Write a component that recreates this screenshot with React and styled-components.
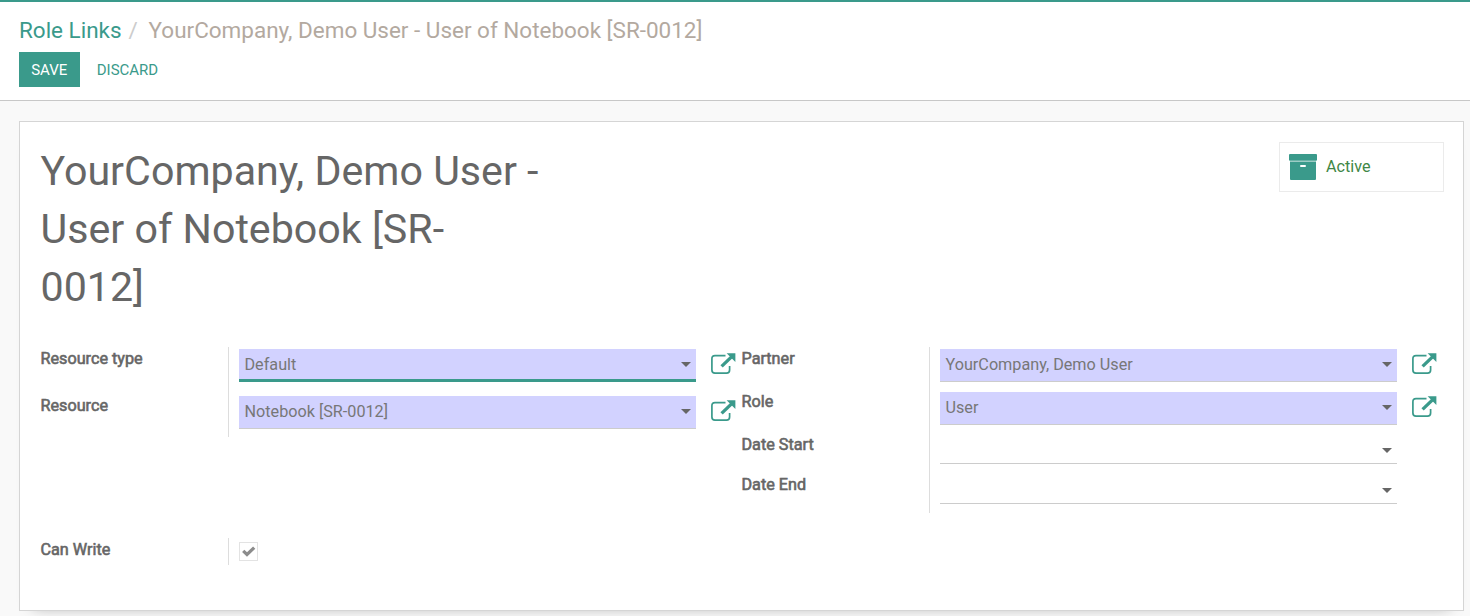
import React from "react";
import styled, { createGlobalStyle } from "styled-components";

const teal = "#3a9a8b";

const GlobalStyle = createGlobalStyle`
  *, *::before, *::after { box-sizing: border-box; }
  html { height: 100%; overflow: hidden; }
  body {
    margin: 0;
    height: 100%;
    overflow: hidden;
    background: #f9f9f9;
    color: #666;
    font: 16.2px/18px Roboto, "Liberation Sans", sans-serif;
  }
`;

const ControlPanel = styled.header`
  height: 101px;
  padding: 13px 19px 0;
  background: #fff;
  border-top: 2px solid ${teal};
  border-bottom: 1px solid #c8c8c8;
`;

const Breadcrumb = styled.nav`
  display: flex;
  height: 30px;
  font-size: 22.48px;
  line-height: 30px;
  white-space: pre;
  color: #b3a9a0;
`;

const Crumb = styled.a`
  color: ${teal};
`;

const Separator = styled.span`
  width: 27px;
  padding-left: 7px;
  color: #ccc;
`;

const Actions = styled.div`
  display: flex;
  gap: 5px;
  margin-top: 7px;
`;

const Button = styled.button`
  height: 35px;
  padding: 2px 12.2px 0;
  border: 0;
  background: ${(p) => (p.$primary ? teal : "transparent")};
  color: ${(p) => (p.$primary ? "#fff" : teal)};
  font: 15px/33px Roboto, sans-serif;
  text-transform: uppercase;
`;

const Sheet = styled.main`
  height: 490px;
  margin: 20px 6px 0 19px;
  padding: 20px 19px 0 20px;
  background: #fff;
  border: 1px solid #d5d5d5;
  box-shadow: 0 10px 14px -14px rgba(0, 0, 0, 0.35);
`;

const SheetTop = styled.div`
  display: flex;
  justify-content: space-between;
  align-items: flex-start;
  height: 205px;
`;

const Title = styled.h1`
  width: 503px;
  margin: 0;
  padding-left: 0.5px;
  font-size: 41.2px;
  font-weight: 400;
  line-height: 58px;
`;

const StatButton = styled.div`
  display: flex;
  align-items: center;
  width: 165px;
  height: 50px;
  padding-left: 9px;
  border: 1px solid #ebebeb;
  color: #3f8746;
`;

const StatLabel = styled.span`
  margin-left: 9px;
`;

const Columns = styled.div`
  display: flex;
  align-items: flex-start;
  height: 191px;
`;

const Group = styled.section`
  display: flex;
  flex-direction: column;
  width: 701px;
  flex: none;
`;

const Row = styled.div`
  display: flex;
  height: ${(p) => p.$height}px;
`;

const Label = styled.label`
  width: 189px;
  flex: none;
  padding: 3px 0 0 0.5px;
  border-right: 1px solid #ddd;
  -webkit-text-stroke: 0.6px #666;
`;

const Field = styled.div`
  display: flex;
  align-items: center;
  justify-content: space-between;
  width: 457px;
  height: ${(p) => (p.$empty ? 29 : 33)}px;
  margin: 2px 15px 0 10px;
  padding: 0 5px 0 5.5px;
  background: ${(p) => (p.$empty ? "transparent" : "#d2d2ff")};
  border-bottom: 1px solid #ccc;
  color: #777;
  ${(p) => p.$focused && `box-shadow: inset 0 -2px ${teal}; border-color: ${teal};`}
`;

const Caret = styled.span`
  border: 5px solid transparent;
  border-top-color: #666;
  border-bottom: 0;
  margin: ${(p) => (p.$empty ? "3px 0 0" : "0 0 2px")};
`;

const LinkIcon = styled.svg`
  width: 26px;
  height: 22px;
  margin-top: 6px;
  flex: none;
`;

const Checkbox = styled.span`
  display: flex;
  align-items: center;
  justify-content: center;
  width: 19px;
  height: 19px;
  margin: 4px 0 0 10px;
  border: 1px solid #e3e3e3;
`;

const ExternalLink = () => (
  <LinkIcon viewBox="0 0 26 22" fill="none" stroke={teal}>
    <path d="M14.5 2.6H4Q.9 2.6.9 5.7V17.1Q.9 20.2 4 20.2H15.5Q18.6 20.2 18.6 17.1V13" strokeWidth="1.7" />
    <path d="M10.6 13.4 20.5 3.9" strokeWidth="3.3" />
    <path d="M15.6 .3H24.4V9.1Z" fill={teal} stroke="none" />
  </LinkIcon>
);

const rowHeight = (field) => {
  if (!field.value) return 40;
  return field.focused ? 47 : 43;
};

const FieldGroup = ({ fields }) => (
  <Group>
    {fields.map((f) => (
      <Row key={f.label} $height={rowHeight(f)}>
        <Label>{f.label}</Label>
        <Field $empty={!f.value} $focused={f.focused}>
          <span>{f.value}</span>
          <Caret $empty={!f.value} />
        </Field>
        {f.value && <ExternalLink />}
      </Row>
    ))}
  </Group>
);

const resourceFields = [
  { label: "Resource type", value: "Default", focused: true },
  { label: "Resource", value: "Notebook [SR-0012]" },
];

const partnerFields = [
  { label: "Partner", value: "YourCompany, Demo User" },
  { label: "Role", value: "User" },
  { label: "Date Start" },
  { label: "Date End" },
];

export default function App() {
  return (
    <>
      <GlobalStyle />
      <ControlPanel>
        <Breadcrumb>
          <Crumb>Role Links</Crumb>
          <Separator>/</Separator>
          <span>YourCompany, Demo User - User of Notebook [SR-0012]</span>
        </Breadcrumb>
        <Actions>
          <Button $primary>Save</Button>
          <Button>Discard</Button>
        </Actions>
      </ControlPanel>
      <Sheet>
        <SheetTop>
          <Title>YourCompany, Demo User - User of Notebook [SR-0012]</Title>
          <StatButton>
            <svg width="28" height="26" viewBox="0 0 28 26" fill={teal}>
              <rect width="28" height="6.7" rx="1" />
              <path fillRule="evenodd" d="M1 7.6H27V25Q27 26 26 26H2Q1 26 1 25ZM12 11Q11 11 11 12T12 13H16Q17 13 17 12T16 11Z" />
            </svg>
            <StatLabel>Active</StatLabel>
          </StatButton>
        </SheetTop>
        <Columns>
          <FieldGroup fields={resourceFields} />
          <FieldGroup fields={partnerFields} />
        </Columns>
        <Row $height={27}>
          <Label>Can Write</Label>
          <Checkbox>
            <svg width="14" height="11" viewBox="0 0 14 11" fill="none" stroke="#8c8c8c" strokeWidth="3.2">
              <path d="M1.2 4.8 5 8.5 12.2 1.6" />
            </svg>
          </Checkbox>
        </Row>
      </Sheet>
    </>
  );
}
